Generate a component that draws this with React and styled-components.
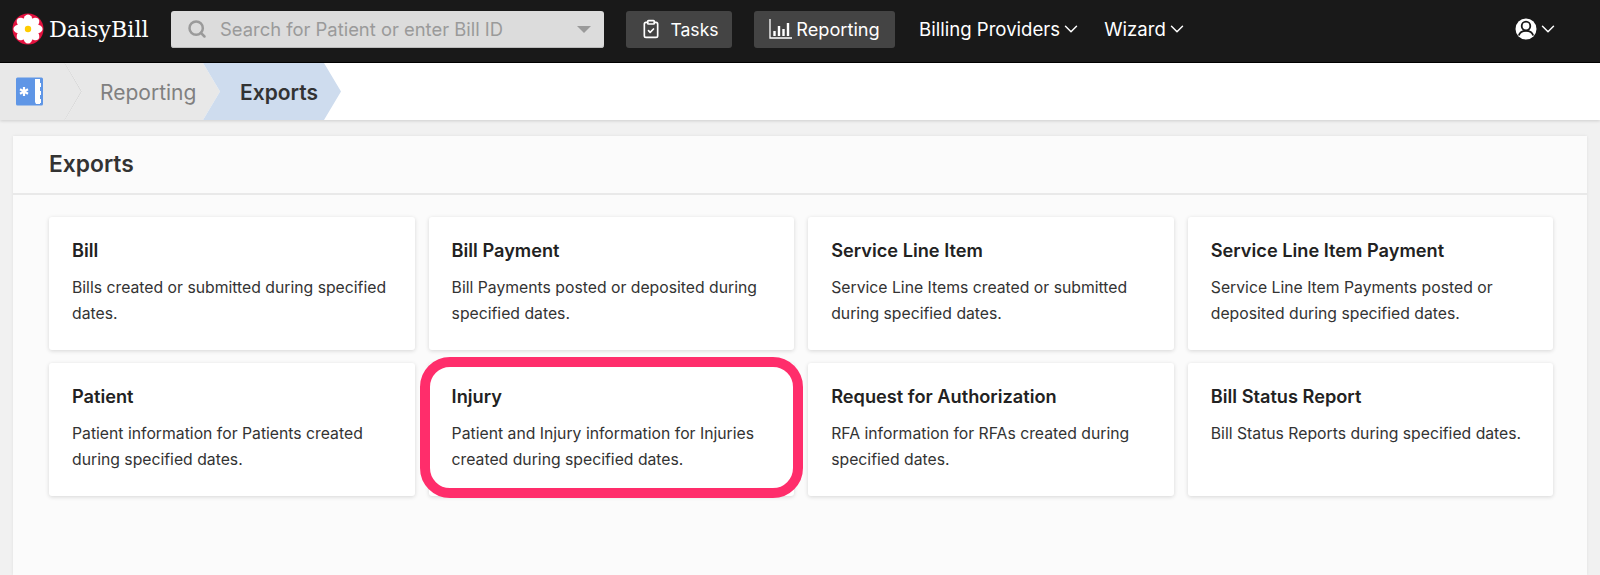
import React from "react";
import styled, { createGlobalStyle } from "styled-components";
import { ChevronDown, Search, ClipboardCheck } from "lucide-react";

const Global = createGlobalStyle`
  html, body { margin: 0; padding: 0; height: 100%; overflow: hidden; background: #f1f1f1; }
  * { box-sizing: border-box; }
  body { font-family: "Inter", "Liberation Sans", sans-serif; -webkit-font-smoothing: antialiased; }
`;
const Page = styled.div`
  height: 575px; display: flex; flex-direction: column; overflow: hidden;
`;
const TopBar = styled.header`
  height: 63px; flex: none; background: #191919; display: flex; align-items: center;
  padding: 0 41.5px 4px 12px; border-bottom: 1px solid #000;
`;
const Brand = styled.div`
  width: 159px; flex: none; display: flex; align-items: center; gap: 5px;
`;
const BrandName = styled.span`
  font-family: "DejaVu Serif", "Liberation Serif", serif; font-size: 22.2px; color: #fff;
`;
const SearchBox = styled.div`
  width: 433px; height: 37px; flex: none; background: #dcdcdc; border-radius: 3px;
  display: flex; align-items: center; padding: 0 13px 0 16px; color: #9a9a9a; font-size: 18.4px; gap: 13px;
  box-shadow: inset 0 -1px 0 #bbb;
`;
const SearchText = styled.span`flex: 1;`;
const Caret = styled.span`
  width: 0; height: 0; border-left: 7px solid transparent; border-right: 7px solid transparent;
  border-top: 7px solid #9a9a9a;
`;
const NavButton = styled.div`
  height: 37px; margin-left: ${p => p.$ml}px; width: ${p => p.$w}px; flex: none; background: #444;
  border-radius: 3px; color: #fff; font-size: ${p => p.$fs}px; display: flex; align-items: center; justify-content: center; gap: ${p => p.$gap}px;
  padding-left: ${p => p.$pl}px;
`;
const NavLink = styled.div`
  margin-left: ${p => p.$ml}px; color: #fff; font-size: 18.6px; display: flex; align-items: center; gap: 0; flex: none;
`;
const UserMenu = styled.div`
  margin-left: auto; display: flex; align-items: center; gap: 0; color: #fff;
`;
const Crumbs = styled.nav`
  height: 57px; flex: none; background: #fff; display: flex; box-shadow: 0 1px 3px rgba(0,0,0,.15); position: relative;
`;
const HomeCrumb = styled.div`
  width: 82px; background: #e8e8e8; display: flex; align-items: center; padding-left: 16px; position: relative;
  clip-path: polygon(0 0, 65px 0, 82px 50%, 65px 100%, 0 100%);
`;
const ChevronLine = styled.svg`
  position: absolute; left: 64px; top: 0; width: 18px; height: 57px;
`;
const Crumb = styled.div`
  margin-left: ${p => p.$ml}px; width: ${p => p.$w}px; height: 57px; flex: none;
  background: ${p => p.$active ? "#cedcee" : "#e8e8e8"};
  color: ${p => p.$active ? "#333" : "#808080"};
  font-size: 21px; font-weight: ${p => p.$active ? 600 : 400};
  padding: 2px 0 0 ${p => p.$pl}px; display: flex; align-items: center;
  clip-path: polygon(0 0, calc(100% - 17px) 0, 100% 50%, calc(100% - 17px) 100%, 0 100%, 17px 50%);
`;
const Main = styled.main`
  flex: 1; padding: 16px 13px 0;
`;
const Panel = styled.section`
  height: 100%; background: #fbfbfb; box-shadow: 0 0 3px rgba(0,0,0,.08);
`;
const PanelHead = styled.h1`
  margin: 0; height: 59px; padding: 0 36px 2px; display: flex; align-items: center; font-size: 22.8px; font-weight: 600;
  color: #333; border-bottom: 2px solid #e9e9e9;
`;
const Grid = styled.div`
  display: grid; grid-template-columns: repeat(4, 365.6px); column-gap: 14px; row-gap: 13px; padding: 22px 36px;
  grid-auto-rows: 133px;
`;
const Card = styled.article`
  background: #fff; border-radius: 3px; box-shadow: 0 1px 4px rgba(0,0,0,.15); padding: 21px 23px; position: relative;
`;
const CardTitle = styled.h2`
  margin: 0 0 13px; font-size: 18.2px; font-weight: 600; color: #222; line-height: 24px;
`;
const CardText = styled.p`
  margin: 0; font-size: 15.75px; color: #333; line-height: 25.5px;
`;
const Ring = styled.div`
  position: absolute; left: -9px; right: -8.5px; top: -6px; bottom: -2px; border: 10px solid #ff2d6b; border-radius: 30px;
`;

const Daisy = () => (
  <svg width="32" height="32" viewBox="0 0 32 32">
    <circle cx="16" cy="16" r="15.5" fill="#e3123f" />
    {[0, 45, 90, 135, 180, 225, 270, 315].map(a => (
      <ellipse key={a} cx="16" cy="8" rx="4.6" ry="6.6" fill="#fff" transform={`rotate(${a} 16 16)`} />
    ))}
    <circle cx="16" cy="16" r="3.2" fill="#fc0" />
  </svg>
);
const BookIcon = () => (
  <svg width="27" height="29" viewBox="0 0 27 29">
    <rect width="27" height="28" y="0.5" rx="1.5" fill="#5f96e6" />
    <path d="M19 2h5v4h1v4h-1v4h1v4h-1v4h1v4h-1v1h-4l-1-2z" fill="#fff" />
    <path d="M8 10v9M4 12.3l8 4.4M12 12.3l-8 4.4" stroke="#fff" strokeWidth="2.2" />
  </svg>
);
const ChartIcon = () => (
  <svg width="24" height="22" viewBox="0 0 24 22" fill="none" stroke="#fff">
    <path d="M1 1v19h22" strokeWidth="1.3" />
    <path d="M5.5 18v-5M10 18V8M14.5 18v-7M19 18V5" strokeWidth="2.4" />
  </svg>
);
const UserIcon = () => (
  <svg width="22" height="22" viewBox="0 0 22 22">
    <circle cx="11" cy="11" r="10.5" fill="#fff" />
    <circle cx="11" cy="8" r="4.3" fill="none" stroke="#191919" strokeWidth="1.8" />
    <path d="M3.8 17.5c1-3.4 3.6-4.6 7.2-4.6s6.2 1.2 7.2 4.6" fill="none" stroke="#191919" strokeWidth="1.8" />
  </svg>
);

const cards = [
  ["Bill", "Bills created or submitted during specified dates."],
  ["Bill Payment", "Bill Payments posted or deposited during specified dates."],
  ["Service Line Item", "Service Line Items created or submitted during specified dates."],
  ["Service Line Item Payment", "Service Line Item Payments posted or deposited during specified dates."],
  ["Patient", "Patient information for Patients created during specified dates."],
  ["Injury", "Patient and Injury information for Injuries created during specified dates.", true],
  ["Request for Authorization", "RFA information for RFAs created during specified dates."],
  ["Bill Status Report", "Bill Status Reports during specified dates."],
];

export default function App() {
  return (
    <Page>
      <Global />
      <TopBar>
        <Brand><Daisy /><BrandName>DaisyBill</BrandName></Brand>
        <SearchBox>
          <Search size={20} strokeWidth={3} />
          <SearchText>Search for Patient or enter Bill ID</SearchText>
          <Caret />
        </SearchBox>
        <NavButton $ml={22} $w={106} $gap={9} $pl={2} $fs={17.6}><ClipboardCheck size={20} />Tasks</NavButton>
        <NavButton $ml={22} $w={141} $gap={3} $pl={0} $fs={18.2}><ChartIcon />Reporting</NavButton>
        <NavLink $ml={24}>Billing Providers<ChevronDown size={22} strokeWidth={1.6} /></NavLink>
        <NavLink $ml={22}>Wizard<ChevronDown size={22} strokeWidth={1.6} /></NavLink>
        <UserMenu><UserIcon /><ChevronDown size={22} strokeWidth={1.6} /></UserMenu>
      </TopBar>
      <Crumbs>
        <HomeCrumb>
          <BookIcon />
          <ChevronLine viewBox="0 0 18 57"><path d="M1 0 L17.5 28.5 L1 57" fill="none" stroke="#d2d2d2" /></ChevronLine>
        </HomeCrumb>
        <Crumb $ml={-17} $w={155} $pl={35}>Reporting</Crumb>
        <Crumb $ml={-17} $w={138} $pl={37} $active>Exports</Crumb>
      </Crumbs>
      <Main>
        <Panel>
          <PanelHead>Exports</PanelHead>
          <Grid>
            {cards.map(([title, text, ring]) => (
              <Card key={title}>
                <CardTitle>{title}</CardTitle>
                <CardText>{text}</CardText>
                {ring && <Ring />}
              </Card>
            ))}
          </Grid>
        </Panel>
      </Main>
    </Page>
  );
}
